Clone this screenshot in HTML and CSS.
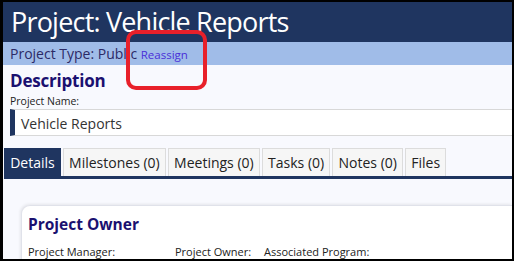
FILE: index.html
```html
<!DOCTYPE html>
<html lang="en">
<head>
    <meta charset="UTF-8">
    <title>Project: Vehicle Reports</title>
    <link rel="stylesheet" href="styles.css">
</head>
<body>
    <div class="frame">
        <div class="title-bar">
            <h1>Project: Vehicle Reports</h1>
        </div>
        <div class="type-bar">
            Project Type: Public <a href="#" class="reassign">Reassign</a>
            <span class="callout"></span>
        </div>
        <div class="content">
            <h2>Description</h2>
            <label class="field-label">Project Name:</label>
            <div class="field-value">Vehicle Reports</div>

            <ul class="tabs">
                <li class="active">Details</li>
                <li>Milestones (0)</li>
                <li>Meetings (0)</li>
                <li>Tasks (0)</li>
                <li>Notes (0)</li>
                <li>Files</li>
            </ul>

            <div class="tab-body">
                <div class="card">
                    <h3>Project Owner</h3>
                    <div class="owner-row">
                        <span class="col-manager">Project Manager:</span>
                        <span class="col-owner">Project Owner:</span>
                        <span>Associated Program:</span>
                    </div>
                </div>
            </div>
        </div>
    </div>
</body>
</html>
```

FILE: styles.css
```css
html, body {
    margin: 0;
    padding: 0;
    background: #000;
}
.frame {
    width: 514px;
    height: 261px;
    box-sizing: border-box;
    border-style: solid;
    border-color: #000;
    border-width: 2px 2px 2px 3px;
    background: #f8f9fe;
    overflow: hidden;
    font-family: "Open Sans", "Noto Sans", sans-serif;
}
.title-bar {
    background: #1f3560;
    height: 40px;
}
.title-bar h1 {
    margin: 0;
    padding-left: 8px;
    font-weight: normal;
    font-size: 27px;
    line-height: 40px;
    color: #fff;
    white-space: nowrap;
    letter-spacing: -0.8px;
}
.type-bar {
    position: relative;
    background: #a0bce8;
    height: 23px;
    line-height: 23px;
    padding-left: 7px;
    font-size: 14px;
    color: #2c2a66;
}
.reassign {
    font-size: 11.5px;
    color: #4a2fd8;
    text-decoration: none;
}
/* red highlight drawn over the screenshot */
.callout {
    position: absolute;
    left: 123px;
    top: -12px;
    width: 73px;
    height: 52px;
    border: 4px solid #e8202a;
    border-radius: 10px;
}
.content {
    padding-left: 1px;
}
.content h2 {
    margin: 4px 0 0 6px;
    font-size: 17px;
    line-height: 24px;
    color: #1a1070;
    letter-spacing: -0.2px;
}
.field-label {
    display: block;
    margin: 1px 0 0 6px;
    font-size: 10.5px;
    line-height: 14px;
    color: #222;
}
.field-value {
    margin: 1px 0 0 6px;
    height: 25px;
    line-height: 27px;
    background: #fff;
    border-top: 1px solid #d8d8d8;
    border-bottom: 1px solid #d8d8d8;
    border-left: 5px solid #1f3560;
    padding-left: 6px;
    font-size: 14px;
    color: #333;
}
.tabs {
    list-style: none;
    margin: 12px 0 0 0;
    padding: 0;
    display: flex;
    gap: 2px;
    border-bottom: 3px solid #1f3560;
}
.tabs li {
    height: 27px;
    line-height: 28px;
    padding: 0 5.2px;
    font-size: 14px;
    color: #222;
    background: #f6f6f6;
    border: 1px solid #dcdcdc;
    border-bottom: none;
}
.tabs li.active {
    background: #1f3560;
    border-color: #1f3560;
    color: #fff;
}
.tab-body {
    padding: 26px 0 0 17px;
}
.card {
    background: #fff;
    border-top: 1px solid #e0e2ea;
    border-left: 1px solid #e0e2ea;
    border-top-left-radius: 9px;
    box-shadow: -1px -1px 3px rgba(0, 0, 0, 0.08);
    padding: 6px 0 0 6px;
    height: 60px;
}
.card h3 {
    margin: 0;
    font-size: 15.5px;
    line-height: 24px;
    color: #1a1070;
}
.owner-row {
    display: flex;
    margin-top: 8px;
    font-size: 11px;
    color: #222;
}
.col-manager {
    width: 147px;
}
.col-owner {
    width: 89px;
}
```
